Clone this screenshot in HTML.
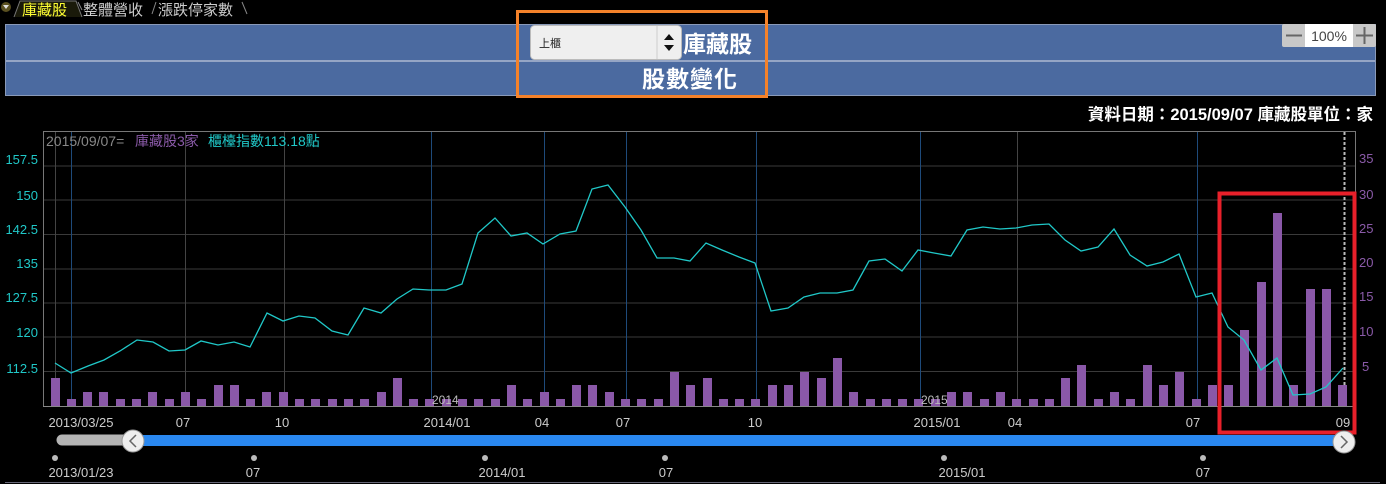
<!DOCTYPE html>
<html><head><meta charset="utf-8"><style>
html,body{margin:0;padding:0;background:#000;width:1386px;height:484px;overflow:hidden}
svg{display:block}
text{font-family:"Liberation Sans","Noto Sans CJK TC",sans-serif}
</style></head><body>
<svg width="1386" height="484" viewBox="0 0 1386 484" xmlns="http://www.w3.org/2000/svg">
<!-- tabs -->
<circle cx="6" cy="7" r="5" fill="#5a5020"/><path d="M3 5 L9 5 L6 9 Z" fill="#ddd"/>
<path d="M14 17 L20 1 L76 1 L82 17" fill="#1a1a0a" stroke="#777" stroke-width="1"/>
<text x="22" y="15" font-size="15" fill="#ffff33">庫藏股</text>
<path d="M78 2 L82 10" stroke="#888"/><text x="83" y="15" font-size="15" fill="#ccc">整體營收</text>
<path d="M152 14 L156 2" stroke="#888"/><text x="158" y="15" font-size="15" fill="#ccc">漲跌停家數</text>
<path d="M242 2 L247 14" stroke="#888"/>
<!-- header panel -->
<rect x="5.5" y="24.5" width="1370" height="71" fill="#4b6aa0" stroke="#8a9ab8"/>
<line x1="6" y1="61" x2="1375" y2="61" stroke="#95a5c5" stroke-width="2"/>
<rect x="530.5" y="25.5" width="151" height="34" rx="4" fill="#efefef" stroke="#bbb"/>
<line x1="657" y1="26" x2="657" y2="59" stroke="#ccc"/>
<text x="539" y="47" font-size="11" fill="#222">上櫃</text>
<path d="M664 40 L669 34 L674 40 Z M664 45 L674 45 L669 51 Z" fill="#111"/>
<text x="683" y="52" font-size="23" font-weight="bold" fill="#fff">庫藏股</text>
<text x="642" y="87" font-size="23" font-weight="bold" fill="#fff" letter-spacing="1">股數變化</text>
<rect x="517.5" y="11.5" width="249" height="85" fill="none" stroke="#f5822a" stroke-width="3"/>
<rect x="1282" y="24" width="94" height="23" rx="2" fill="#c8c8c8"/>
<rect x="1305" y="24" width="48" height="23" fill="#fff"/>
<line x1="1286" y1="35.5" x2="1302" y2="35.5" stroke="#666" stroke-width="2"/>
<path d="M1356 35.5 H1373 M1364.5 27 V44" stroke="#666" stroke-width="2"/>
<text x="1329" y="41" font-size="14" fill="#444" text-anchor="middle">100%</text>
<text x="1373" y="120" font-size="16.5" font-weight="bold" fill="#fff" text-anchor="end">資料日期：2015/09/07 庫藏股單位：家</text>
<!-- chart frame -->
<rect x="43.5" y="131.5" width="1312" height="275" fill="none" stroke="#777"/>
<g stroke="#3a3a3a">
<line x1="44" y1="166" x2="1355" y2="166"/><line x1="44" y1="200" x2="1355" y2="200"/>
<line x1="44" y1="234.5" x2="1355" y2="234.5"/><line x1="44" y1="269" x2="1355" y2="269"/>
<line x1="44" y1="303" x2="1355" y2="303"/><line x1="44" y1="337" x2="1355" y2="337"/>
<line x1="44" y1="371.5" x2="1355" y2="371.5"/>
</g>
<g stroke="#444"><line x1="55.5" y1="132" x2="55.5" y2="406"/><line x1="185.5" y1="132" x2="185.5" y2="406"/><line x1="284.5" y1="132" x2="284.5" y2="406"/><line x1="1017.5" y1="132" x2="1017.5" y2="406"/></g>
<g stroke="#1e4a7a">
<line x1="71.5" y1="132" x2="71.5" y2="406"/>
<line x1="431.5" y1="132" x2="431.5" y2="406"/>
<line x1="544.5" y1="132" x2="544.5" y2="406"/><line x1="626.5" y1="132" x2="626.5" y2="406"/>
<line x1="756.5" y1="132" x2="756.5" y2="406"/><line x1="920.5" y1="132" x2="920.5" y2="406"/>
<line x1="1197.5" y1="132" x2="1197.5" y2="406"/>
</g>
<line x1="1344.5" y1="132" x2="1344.5" y2="406" stroke="#bbb" stroke-width="2" stroke-dasharray="3,2"/>
<line x1="43" y1="406.5" x2="1356" y2="406.5" stroke="#888"/>
<!-- left labels -->
<g font-size="13" fill="#20c8c8" text-anchor="end">
<text x="38" y="164">157.5</text><text x="38" y="200">150</text><text x="38" y="234">142.5</text>
<text x="38" y="268">135</text><text x="38" y="302">127.5</text><text x="38" y="337">120</text><text x="38" y="373">112.5</text>
</g>
<g font-size="13" fill="#8a5aa8">
<text x="1359" y="163">35</text><text x="1359" y="199">30</text><text x="1359" y="233">25</text>
<text x="1359" y="267">20</text><text x="1359" y="301">15</text><text x="1359" y="336">10</text><text x="1362" y="371">5</text>
</g>
<text x="46" y="146" font-size="14" fill="#888">2015/09/07=</text>
<text x="135" y="146" font-size="14" fill="#8a5aa8">庫藏股3家</text>
<text x="208" y="146" font-size="14" fill="#20c8c8">櫃檯指數113.18點</text>
<!-- bars -->
<g fill="#8a58a8">
<rect x="51" y="378" width="9" height="28"/><rect x="67" y="399" width="9" height="7"/><rect x="83" y="392" width="9" height="14"/><rect x="99" y="392" width="9" height="14"/><rect x="116" y="399" width="9" height="7"/><rect x="132" y="399" width="9" height="7"/><rect x="148" y="392" width="9" height="14"/><rect x="165" y="399" width="9" height="7"/><rect x="181" y="392" width="9" height="14"/><rect x="197" y="399" width="9" height="7"/>
<rect x="214" y="385" width="9" height="21"/><rect x="230" y="385" width="9" height="21"/><rect x="246" y="399" width="9" height="7"/><rect x="262" y="392" width="9" height="14"/><rect x="279" y="392" width="9" height="14"/><rect x="295" y="399" width="9" height="7"/><rect x="311" y="399" width="9" height="7"/><rect x="328" y="399" width="9" height="7"/><rect x="344" y="399" width="9" height="7"/><rect x="360" y="399" width="9" height="7"/>
<rect x="377" y="392" width="9" height="14"/><rect x="393" y="378" width="9" height="28"/><rect x="409" y="399" width="9" height="7"/><rect x="425" y="399" width="9" height="7"/><rect x="442" y="399" width="9" height="7"/><rect x="458" y="399" width="9" height="7"/><rect x="474" y="399" width="9" height="7"/><rect x="491" y="399" width="9" height="7"/><rect x="507" y="385" width="9" height="21"/><rect x="523" y="399" width="9" height="7"/>
<rect x="540" y="392" width="9" height="14"/><rect x="556" y="399" width="9" height="7"/><rect x="572" y="385" width="9" height="21"/><rect x="588" y="385" width="9" height="21"/><rect x="605" y="392" width="9" height="14"/><rect x="621" y="399" width="9" height="7"/><rect x="637" y="399" width="9" height="7"/><rect x="654" y="399" width="9" height="7"/><rect x="670" y="372" width="9" height="34"/><rect x="686" y="385" width="9" height="21"/>
<rect x="703" y="378" width="9" height="28"/><rect x="719" y="399" width="9" height="7"/><rect x="735" y="399" width="9" height="7"/><rect x="751" y="399" width="9" height="7"/><rect x="768" y="385" width="9" height="21"/><rect x="784" y="385" width="9" height="21"/><rect x="800" y="372" width="9" height="34"/><rect x="817" y="378" width="9" height="28"/><rect x="833" y="358" width="9" height="48"/><rect x="849" y="392" width="9" height="14"/>
<rect x="866" y="399" width="9" height="7"/><rect x="882" y="399" width="9" height="7"/><rect x="898" y="399" width="9" height="7"/><rect x="914" y="399" width="9" height="7"/><rect x="931" y="399" width="9" height="7"/><rect x="947" y="392" width="9" height="14"/><rect x="963" y="392" width="9" height="14"/><rect x="980" y="399" width="9" height="7"/><rect x="996" y="392" width="9" height="14"/><rect x="1012" y="399" width="9" height="7"/>
<rect x="1029" y="399" width="9" height="7"/><rect x="1045" y="399" width="9" height="7"/><rect x="1061" y="378" width="9" height="28"/><rect x="1077" y="365" width="9" height="41"/><rect x="1094" y="399" width="9" height="7"/><rect x="1110" y="392" width="9" height="14"/><rect x="1126" y="399" width="9" height="7"/><rect x="1143" y="365" width="9" height="41"/><rect x="1159" y="385" width="9" height="21"/><rect x="1175" y="372" width="9" height="34"/>
<rect x="1192" y="399" width="9" height="7"/><rect x="1208" y="385" width="9" height="21"/><rect x="1224" y="385" width="9" height="21"/><rect x="1240" y="330" width="9" height="76"/><rect x="1257" y="282" width="9" height="124"/><rect x="1273" y="213" width="9" height="193"/><rect x="1289" y="385" width="9" height="21"/><rect x="1306" y="289" width="9" height="117"/><rect x="1322" y="289" width="9" height="117"/><rect x="1338" y="385" width="9" height="21"/>
</g>
<text x="432" y="404" font-size="12" fill="#bbb">2014</text>
<text x="921" y="404" font-size="12" fill="#bbb">2015</text>
<!-- index line -->
<polyline fill="none" stroke="#20c8c8" stroke-width="1.3" points="55,363 71,373 88,366 104,360 120,351 137,340 153,342 169,351 185,350 201,341 218,345 234,342 250,347 267,313 283,321 299,316 315,318 332,331 348,335 364,308 381,313 397,299 413,289 429,290 446,290 462,284 478,233 495,218 511,236 527,233 543,244 560,234 576,231 592,189 608,185 625,207 641,230 657,258 674,258 690,261 706,243 722,250 739,257 755,263 771,311 788,308 804,297 820,293 837,293 853,290 869,261 885,259 902,271 918,250 934,253 951,256 967,230 983,227 1000,229 1016,228 1032,225 1049,224 1065,240 1081,251 1098,247 1114,229 1130,255 1147,266 1163,262 1179,254 1196,297 1212,293 1228,327 1244,340 1261,370 1277,358 1293,395 1310,394 1326,387 1343,368"/>
<!-- x labels -->
<g font-size="13" fill="#ccc" text-anchor="middle">
<text x="81" y="427">2013/03/25</text><text x="183" y="427">07</text><text x="282" y="427">10</text>
<text x="447" y="427">2014/01</text><text x="542" y="427">04</text><text x="623" y="427">07</text>
<text x="755" y="427">10</text><text x="937" y="427">2015/01</text><text x="1015" y="427">04</text>
<text x="1193" y="427">07</text><text x="1343" y="427">09</text>
</g>
<!-- red box -->
<rect x="1219.5" y="193.5" width="135" height="239" fill="none" stroke="#e8202a" stroke-width="4"/>
<!-- slider -->
<line x1="62" y1="440" x2="133" y2="440" stroke="#b4b4b4" stroke-width="11" stroke-linecap="round"/>
<rect x="133" y="435" width="1210" height="11" fill="#2a88f0"/>
<circle cx="133" cy="441" r="11" fill="#eee" stroke="#999"/>
<path d="M136 435 L130 441 L136 447" fill="none" stroke="#666" stroke-width="1.5"/>
<circle cx="1344" cy="442" r="11" fill="#eee" stroke="#999"/>
<path d="M1341 436 L1347 442 L1341 448" fill="none" stroke="#666" stroke-width="1.5"/>
<g fill="#bbb"><circle cx="55" cy="458" r="3"/><circle cx="254" cy="458" r="3"/><circle cx="485" cy="458" r="3"/><circle cx="665" cy="458" r="3"/><circle cx="944" cy="458" r="3"/><circle cx="1203" cy="458" r="3"/></g>
<g font-size="13" fill="#ccc" text-anchor="middle">
<text x="81" y="477">2013/01/23</text><text x="253" y="477">07</text><text x="502" y="477">2014/01</text>
<text x="666" y="477">07</text><text x="962" y="477">2015/01</text><text x="1203" y="477">07</text>
</g>
<line x1="5" y1="482.5" x2="1380" y2="482.5" stroke="#667" />
</svg>
</body></html>
